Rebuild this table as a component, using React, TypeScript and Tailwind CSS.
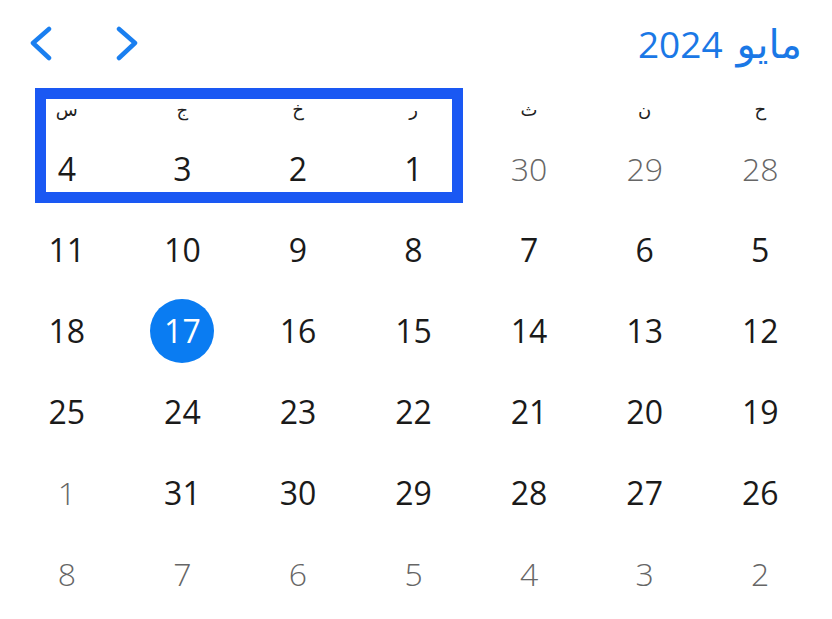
import React from "react";

const weekdays = ["ح", "ن", "ث", "ر", "خ", "ج", "س"];

type Day = { n: number; out?: boolean; sel?: boolean };

const weeks: Day[][] = [
  [{ n: 28, out: true }, { n: 29, out: true }, { n: 30, out: true }, { n: 1 }, { n: 2 }, { n: 3 }, { n: 4 }],
  [{ n: 5 }, { n: 6 }, { n: 7 }, { n: 8 }, { n: 9 }, { n: 10 }, { n: 11 }],
  [{ n: 12 }, { n: 13 }, { n: 14 }, { n: 15 }, { n: 16 }, { n: 17, sel: true }, { n: 18 }],
  [{ n: 19 }, { n: 20 }, { n: 21 }, { n: 22 }, { n: 23 }, { n: 24 }, { n: 25 }],
  [{ n: 26 }, { n: 27 }, { n: 28 }, { n: 29 }, { n: 30 }, { n: 31 }, { n: 1, out: true }],
  [{ n: 2, out: true }, { n: 3, out: true }, { n: 4, out: true }, { n: 5, out: true }, { n: 6, out: true }, { n: 7, out: true }, { n: 8, out: true }],
];

export default function App() {
  return (
    <div
      dir="rtl"
      className="w-[832px] h-[619px] bg-white overflow-hidden"
      style={{ fontFamily: '"Open Sans", "Noto Sans", "DejaVu Sans", sans-serif' }}
    >
      <div className="h-[88px] flex items-center justify-between pr-[30px] pl-[30px]">
        <div className="flex items-baseline gap-[14px] text-[#1a78e6] leading-none pb-[2px]">
          <span className="text-[40px]">مايو</span>
          <span className="text-[37px]">2024</span>
        </div>
        <div className="flex items-center gap-[64px]" dir="ltr">
          <svg width="22" height="36" viewBox="0 0 22 36" className="text-[#1a7ff0]">
            <polyline points="19,3 3,17 19,32" fill="none" stroke="currentColor" strokeWidth="4.5" strokeLinecap="round" strokeLinejoin="round" />
          </svg>
          <svg width="22" height="36" viewBox="0 0 22 36" className="text-[#1a7ff0]">
            <polyline points="3,3 19,17 3,32" fill="none" stroke="currentColor" strokeWidth="4.5" strokeLinecap="round" strokeLinejoin="round" />
          </svg>
        </div>
      </div>
      <div className="relative pr-[14px] pl-[9px]">
        <div className="grid grid-cols-7 h-[40px] items-center">
          {weekdays.map((w) => (
            <div key={w} className="text-center text-[18px] text-[#222] leading-none pt-[2px]">
              {w}
            </div>
          ))}
        </div>
        {weeks.map((wk, i) => (
          <div key={i} className="grid grid-cols-7 h-[81px] items-center">
            {wk.map((d, j) => (
              <div key={j} className="flex items-center justify-center">
                {d.sel ? (
                  <div className="w-[64px] h-[64px] rounded-full bg-[#0a7cf2] text-white text-[32px] flex items-center justify-center leading-none">
                    {d.n}
                  </div>
                ) : (
                  <span
                    className={
                      d.out
                        ? "text-[32px] font-light text-[#666] leading-none"
                        : "text-[32px] text-[#1a1a1a] leading-none"
                    }
                  >
                    {d.n}
                  </span>
                )}
              </div>
            ))}
          </div>
        ))}
        <div className="absolute left-[35px] top-0 w-[428px] h-[115px] border-[11px] border-[#1a58f3] pointer-events-none" />
      </div>
    </div>
  );
}
